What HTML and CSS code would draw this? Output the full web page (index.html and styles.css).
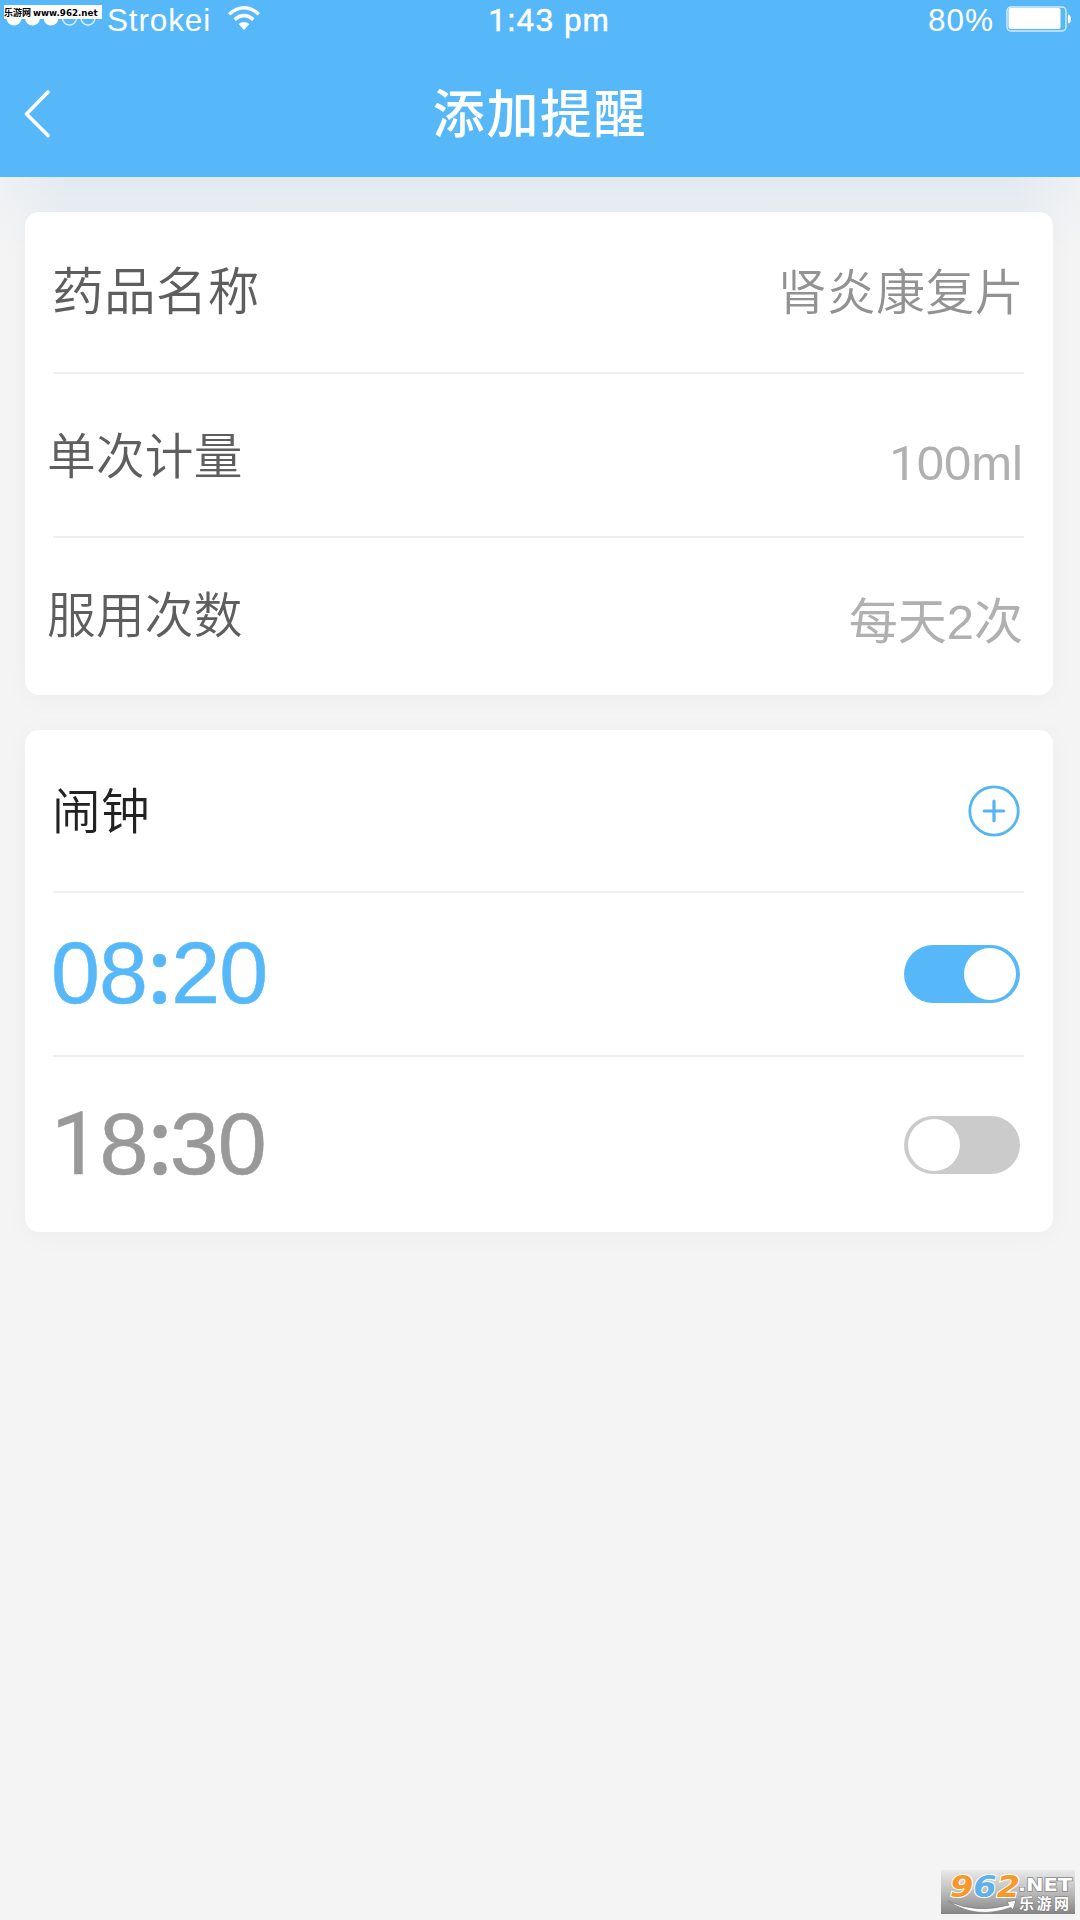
FILE: index.html
```html
<!DOCTYPE html>
<html lang="zh-CN">
<head>
<meta charset="utf-8">
<title>添加提醒</title>
<link rel="stylesheet" href="styles.css">
</head>
<body>
<header class="header">
  <div class="status">
    <div class="status-left">
      <svg class="signal" width="92" height="18" viewBox="0 0 92 18"><g fill="#fff"><circle cx="8" cy="9" r="7.5"/><circle cx="26.500" cy="9" r="7.500"/><circle cx="45" cy="9" r="7.500"/></g><g fill="none" stroke="#fff" stroke-width="1.300" opacity=".8"><circle cx="63.500" cy="9" r="7"/><circle cx="82" cy="9" r="7"/></g></svg>
      <span class="carrier">Strokei</span>
      <svg class="wifi" width="32" height="24" viewBox="0 0 32 24"><g fill="none" stroke="#fff" stroke-width="3.400"><path d="M1.200 8.300Q16-4.600 30.800 8.300"/><path d="M6.600 13.600Q16 5.600 25.400 13.600"/></g><path d="M10.600 18Q16 13.800 21.400 18L16 24Z" fill="#fff"/></svg>
    </div>
    <span class="clock"><span class="one">1</span>:43 pm</span>
    <div class="status-right">
      <span class="percent">80%</span>
      <svg class="battery" width="66" height="26" viewBox="0 0 66 26"><rect x="1" y="1" width="59" height="24" rx="4" fill="none" stroke="#fff" stroke-width="1.400" opacity=".75"/><rect x="2.500" y="2" width="52" height="21" rx="2" fill="#fff"/><path d="M62 8.500q3 .5 3 4.500t-3 4.500z" fill="#fff"/></svg>
    </div>
  </div>
  <nav class="nav">
    <svg class="back" width="27" height="48" viewBox="0 0 27 48"><path d="M24 2L2.500 24 24 45.500" fill="none" stroke="#fff" stroke-width="3.600" stroke-linecap="round" stroke-linejoin="round"/></svg>
    <h1 class="title">添加提醒</h1>
  </nav>
</header>
<main class="content">
  <section class="card">
    <div class="row row-name"><span class="label label-large">药品名称</span><span class="value value-name">肾炎康复片</span></div>
    <div class="row row-dose"><span class="label">单次计量</span><span class="value value-dose"><span class="one">1</span>00ml</span></div>
    <div class="row row-times"><span class="label label-times">服用次数</span><span class="value value-times">每天2次</span></div>
  </section>
  <section class="card">
    <div class="row row-alarm"><span class="label label-alarm">闹钟</span>
      <svg class="add" width="52" height="52" viewBox="0 0 52 52"><g fill="none" stroke="#55b5f2" stroke-width="2.800"><circle cx="26" cy="26" r="24.200"/><path d="M16.200 26h19.600M26 16.200v19.600" stroke-width="3.200" stroke-linecap="round"/></g></svg>
    </div>
    <div class="row row-on"><span class="time">08<span class="colon">:</span>20</span><span class="toggle toggle-on"><span class="knob"></span></span></div>
    <div class="row row-off"><span class="time time-off"><span class="one">1</span>8<span class="colon">:</span><span class="tight">30</span></span><span class="toggle"><span class="knob"></span></span></div>
  </section>
</main>
<div class="site-tag">乐游网 <span class="site-url">www.962.net</span></div>
<svg class="site-logo" width="134" height="44" viewBox="0 0 134 44">
  <defs><linearGradient id="plate" x1="0" y1="0" x2="0" y2="1"><stop offset="0" stop-color="#e9e9e9"/><stop offset=".5" stop-color="#bcbcbc"/><stop offset="1" stop-color="#858585"/></linearGradient></defs>
  <rect width="134" height="44" fill="url(#plate)"/>
  <text class="logo-number" x="9" y="27" textLength="70" lengthAdjust="spacingAndGlyphs"><tspan fill="#f7982a">9</tspan><tspan fill="#5fb1e8">6</tspan><tspan fill="#f7982a">2</tspan></text>
  <text class="logo-net" x="77" y="21" textLength="54" lengthAdjust="spacingAndGlyphs">.NET</text>
  <path d="M7 31Q35 44 68 35L66 32 75 30 72 40 70 37.500Q35 50 7 31Z" fill="#fff" stroke="#777" stroke-width=".7"/>
  <text class="logo-cn" x="78" y="39" textLength="50">乐游网</text>
</svg>
</body>
</html>
```
FILE: styles.css
```css
* { box-sizing: border-box; }
body {
  margin: 0;
  width: 1080px;
  height: 1920px;
  overflow: hidden;
  position: relative;
  background: #f4f4f4;
  font-family: "Noto Sans CJK SC", sans-serif;
}
svg { display: block; flex: none; }
.header { height: 177px; background: #57b8f9; color: #fff; }
.status {
  height: 40px;
  display: grid;
  grid-template-columns: 1fr auto 1fr;
  align-items: center;
  padding: 0 11px 0 6px;
  font: 31.5px/40px "Liberation Sans", sans-serif;
}
.status-left, .status-right { display: flex; align-items: center; }
.status-right { justify-content: flex-end; }
.signal { margin-right: 9px; margin-top: -5px; }
.carrier { letter-spacing: .85px; width: 121px; }
.wifi { margin-top: -4px; }
.clock { letter-spacing: 1.1px; -webkit-text-stroke: .5px #fff; padding-left: 23px; }
.one { font-family: Roboto, sans-serif; line-height: 1; }
.percent { letter-spacing: 1px; margin-right: 12px; }
.battery { margin-top: -3px; margin-right: -3px; }
.nav {
  height: 137px;
  display: grid;
  grid-template-columns: 27px 1fr 27px;
  align-items: center;
  padding: 0 24px;
}
.back { margin-top: 10px; }
.title {
  margin: 0;
  padding-top: 5px;
  text-align: center;
  font-size: 52px;
  line-height: 80px;
  font-weight: 500;
  letter-spacing: 1.6px;
}
.content {
  display: flex;
  flex-direction: column;
  gap: 35px;
  padding: 35px 27px 0 25px;
  background:
    linear-gradient(90deg, rgba(244, 244, 244, .7), rgba(244, 244, 244, 0) 70px, rgba(244, 244, 244, 0) 1010px, rgba(244, 244, 244, .7)),
    linear-gradient(#e1e9f1, #f4f4f4 80px);
}
.card {
  border-radius: 14px;
  background: #fff;
  box-shadow: 0 4px 28px rgba(0, 0, 0, .03);
  padding: 0 29px 0 28px;
}
.row {
  display: flex;
  align-items: center;
  justify-content: space-between;
  border-bottom: 2px solid #efefef;
}
.row:last-child { border-bottom: 0; }
.row-name { height: 162px; }
.row-dose { height: 164px; }
.row-times { height: 157px; }
.row-alarm { height: 163px; }
.row-on { height: 164px; }
.row-off { height: 175px; }
.label { color: #5e5e5e; font-size: 48.7px; line-height: 70px; margin-left: -6px; padding-bottom: 5px; font-weight: 350; letter-spacing: .2px; }
.label-large { font-size: 51.7px; margin-left: -1px; padding-bottom: 8px; }
.label-times { padding-bottom: 10px; }
.label-alarm { color: #222; margin-left: -1px; }
.value { font-size: 49px; line-height: 70px; color: #929292; }
.value-name { padding-bottom: 7px; font-weight: 350; letter-spacing: .3px; }
.value-dose { font-family: "Liberation Sans", sans-serif; color: #b0b0b0; padding-top: 16px; margin-right: 1px; }
.value-times { font-family: "Liberation Sans", "Noto Sans CJK SC", sans-serif; color: #b0b0b0; padding-top: 10px; margin-right: 1px; }
.add { margin-right: 4px; }
.time { font: 88px/100px "Liberation Sans", sans-serif; color: #57b8f9; margin-left: -2px; padding-bottom: 2px; letter-spacing: -1px; -webkit-text-stroke: .5px currentColor; }
.time-off { color: #999; }
.colon { font-family: "Open Sans", sans-serif; font-weight: 600; display: inline-block; width: 24.3px; text-align: center; line-height: 80px; }
.tight { margin-left: -2px; }
.toggle { display: flex; width: 116px; height: 58px; padding: 3px 4px; border-radius: 29px; background: #cbcbcb; margin-right: 4px; }
.toggle-on { background: #57b8f9; justify-content: flex-end; }
.knob { width: 52px; height: 52px; border-radius: 50%; background: #fff; }
.site-tag {
  position: absolute;
  left: 4px;
  top: 5px;
  width: 98px;
  height: 14px;
  background: #fff;
  color: #000;
  font-size: 9px;
  line-height: 15px;
  font-weight: 700;
  white-space: nowrap;
}
.site-url { font-family: "DejaVu Sans", sans-serif; font-size: 8.700px; }
.site-logo { position: absolute; left: 941px; top: 1870px; }
.logo-number { font: italic 700 31px "DejaVu Sans", sans-serif; stroke: #fff; stroke-width: 2px; paint-order: stroke; }
.logo-net { font: 700 18px "DejaVu Sans", sans-serif; fill: #fff; stroke: #888; stroke-width: 1.5px; paint-order: stroke; }
.logo-cn { font: 700 15px "Noto Sans CJK SC", sans-serif; fill: #fff; stroke: #777; stroke-width: 1px; paint-order: stroke; }
```
